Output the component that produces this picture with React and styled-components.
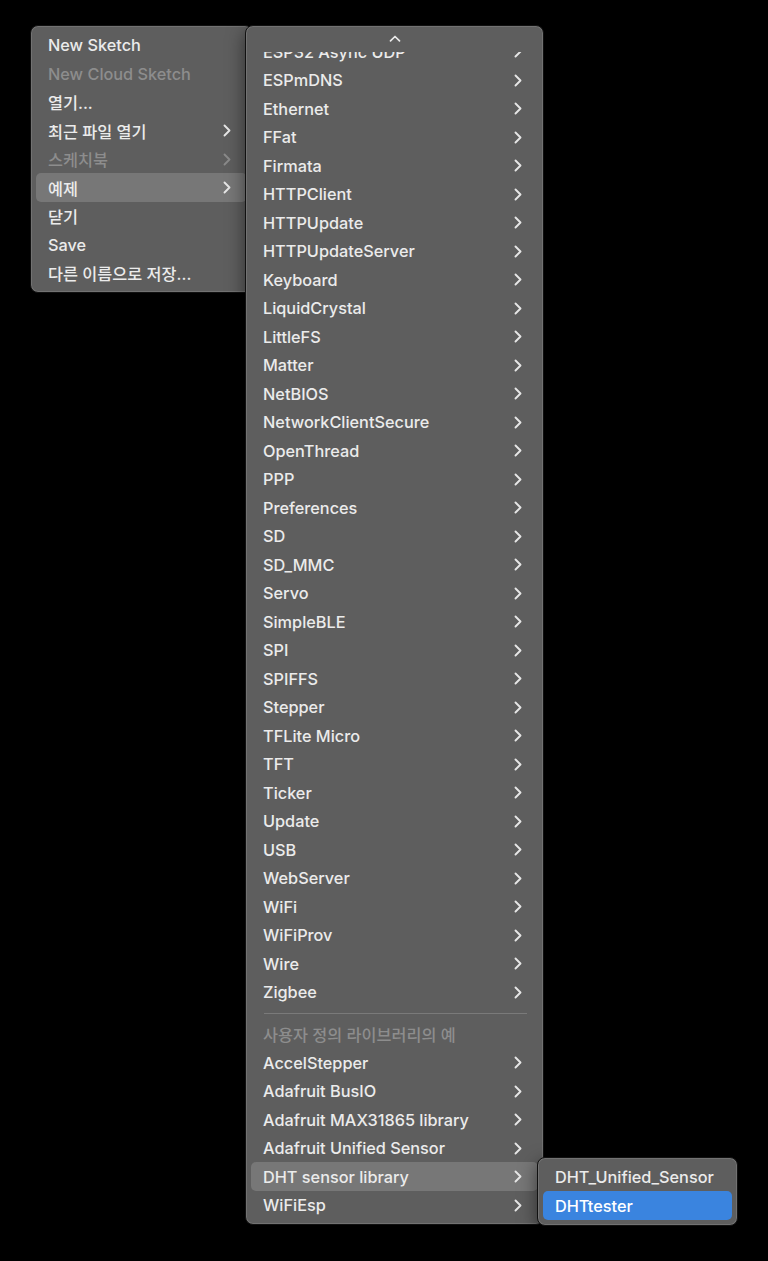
import React from 'react'
import styled, { createGlobalStyle } from 'styled-components'

const GlobalStyle = createGlobalStyle`
  html, body {
    margin: 0;
    padding: 0;
    background: #000;
  }
  body {
    font-family: Inter, "Noto Sans CJK KR", "Noto Sans", sans-serif;
    -webkit-font-smoothing: antialiased;
  }
`

const Stage = styled.div`
  width: 768px;
  height: 1261px;
  box-sizing: border-box;
  padding: 25px 0 0 30px;
  display: flex;
  align-items: flex-start;
  overflow: hidden;
`

const Menu = styled.div`
  position: relative;
  z-index: ${p => p.$level};
  box-sizing: border-box;
  width: ${p => p.$width}px;
  margin-left: ${p => p.$overlap ? -p.$overlap : 0}px;
  margin-top: ${p => p.$top || 0}px;
  padding: ${p => p.$scroll ? '0 0 4.75px' : '4.75px 0'};
  background: #5e5e5e;
  border: 1px solid #111;
  border-radius: 8px;
  box-shadow: inset 0 0 0 1px rgba(255, 255, 255, 0.13), 0 6px 18px rgba(0, 0, 0, 0.5);
  flex-shrink: 0;
`

const ScrollArrow = styled.div`
  height: 26px;
  display: flex;
  align-items: flex-start;
  justify-content: center;
  padding-top: 9px;
  box-sizing: border-box;
  color: #e8e8e8;
`

const Viewport = styled.div`
  overflow: hidden;
`

const List = styled.div`
  margin-top: ${p => p.$offset ? -p.$offset : 0}px;
`

const Row = styled.div`
  height: 28.5px;
  margin: 0 5px;
  padding: 0 16px 0 12px;
  display: flex;
  align-items: center;
  justify-content: space-between;
  border-radius: 5px;
  font-size: 16.3px;
  font-weight: 500;
  white-space: nowrap;
  color: ${p => (p.$disabled ? '#8d8d8d' : p.$active === 'blue' ? '#fff' : '#ebebeb')};
  background: ${p => (p.$active === 'blue' ? '#3a84df' : p.$active ? '#777' : 'transparent')};
`

const Separator = styled.div`
  height: 13.5px;
  display: flex;
  align-items: center;
  margin: 0 16px 0 18px;
  &::after {
    content: '';
    flex: 1;
    height: 1px;
    background: #7a7a7a;
  }
`

const Chevron = ({ dim }) => (
  <svg width="8" height="13" viewBox="0 0 8 13" fill="none">
    <path
      d="M1.5 1.5 L6.5 6.5 L1.5 11.5"
      stroke={dim ? '#8a8a8a' : '#e6e6e6'}
      strokeWidth="1.9"
      strokeLinecap="round"
      strokeLinejoin="round"
    />
  </svg>
)

const UpChevron = () => (
  <svg width="12" height="7" viewBox="0 0 12 7" fill="none">
    <path d="M1.5 5.8 L6 1.5 L10.5 5.8" stroke="#eaeaea" strokeWidth="1.7" strokeLinecap="round" strokeLinejoin="round" />
  </svg>
)

const fileItems = [
  { label: 'New Sketch' },
  { label: 'New Cloud Sketch', disabled: true },
  { label: '열기...' },
  { label: '최근 파일 열기', sub: true },
  { label: '스케치북', sub: true, disabled: true },
  { label: '예제', sub: true, active: true },
  { label: '닫기' },
  { label: 'Save' },
  { label: '다른 이름으로 저장...' }
]

const builtIn = [
  'ESP32 Async UDP', 'ESPmDNS', 'Ethernet', 'FFat', 'Firmata', 'HTTPClient', 'HTTPUpdate',
  'HTTPUpdateServer', 'Keyboard', 'LiquidCrystal', 'LittleFS', 'Matter', 'NetBIOS',
  'NetworkClientSecure', 'OpenThread', 'PPP', 'Preferences', 'SD', 'SD_MMC', 'Servo',
  'SimpleBLE', 'SPI', 'SPIFFS', 'Stepper', 'TFLite Micro', 'TFT', 'Ticker', 'Update', 'USB',
  'WebServer', 'WiFi', 'WiFiProv', 'Wire', 'Zigbee'
]

const custom = [
  'AccelStepper', 'Adafruit BusIO', 'Adafruit MAX31865 library', 'Adafruit Unified Sensor',
  'DHT sensor library', 'WiFiEsp'
]

const dhtExamples = ['DHT_Unified_Sensor', 'DHTtester']

export default function App() {
  return (
    <>
      <GlobalStyle />
      <Stage>
        <Menu $level={1} $width={223}>
          {fileItems.map(item => (
            <Row key={item.label} $disabled={item.disabled} $active={item.active}>
              <span>{item.label}</span>
              {item.sub && <Chevron dim={item.disabled} />}
            </Row>
          ))}
        </Menu>

        <Menu $level={2} $width={299} $overlap={8} $scroll>
          <ScrollArrow>
            <UpChevron />
          </ScrollArrow>
          <Viewport>
            <List $offset={14.75}>
              {builtIn.map(name => (
                <Row key={name}>
                  <span>{name}</span>
                  <Chevron />
                </Row>
              ))}
              <Separator />
              <Row $disabled>
                <span>사용자 정의 라이브러리의 예</span>
              </Row>
              {custom.map(name => (
                <Row key={name} $active={name === 'DHT sensor library'}>
                  <span>{name}</span>
                  <Chevron />
                </Row>
              ))}
            </List>
          </Viewport>
        </Menu>

        <Menu $level={3} $width={201} $overlap={7} $top={1132}>
          {dhtExamples.map(name => (
            <Row key={name} $active={name === 'DHTtester' ? 'blue' : undefined}>
              <span>{name}</span>
            </Row>
          ))}
        </Menu>
      </Stage>
    </>
  )
}
